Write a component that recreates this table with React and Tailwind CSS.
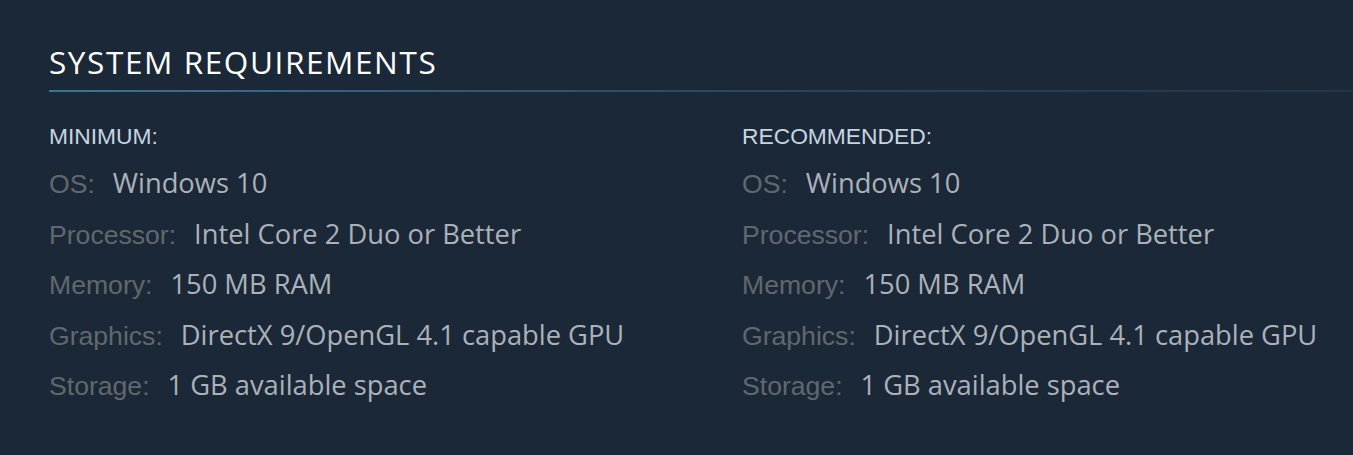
import React from 'react'

const ROWS = [
  ['OS:', 'Windows 10'],
  ['Processor:', 'Intel Core 2 Duo or Better'],
  ['Memory:', '150 MB RAM'],
  ['Graphics:', 'DirectX 9/OpenGL 4.1 capable GPU'],
  ['Storage:', '1 GB available space'],
]

function Column({ title }) {
  return (
    <div className="w-[693px] shrink-0">
      <div className="font-['Liberation_Sans',Arial,sans-serif] text-[22.8px] leading-[24px] text-[#c7d5e0] uppercase">{title}</div>
      <ul className="mt-[10px]">
        {ROWS.map(([label, value]) => (
          <li key={label} className="h-[50.5px] leading-[50.5px] whitespace-nowrap">
            <span className="font-['Liberation_Sans',Arial,sans-serif] text-[26.6px] text-[#61686d]">{label}</span>
            <span className="ml-[18px] text-[#acb2b8]">{value}</span>
          </li>
        ))}
      </ul>
    </div>
  )
}

export default function App() {
  return (
    <div className="h-[455px] bg-[#1b2838] pt-[44px] pl-[49px] overflow-hidden font-['Open_Sans',sans-serif] text-[27.3px]">
      {/* section header */}
      <h2 className="text-[31.5px] leading-[36px] tracking-[1.6px] text-white uppercase pb-[10px]">System Requirements</h2>
      <div className="h-[2px] bg-gradient-to-r from-[#3f7495] via-[#2a4a62] to-[#233446]" />

      <div className="flex pt-[32px]">
        <Column title="Minimum:" />
        <Column title="Recommended:" />
      </div>
    </div>
  )
}
